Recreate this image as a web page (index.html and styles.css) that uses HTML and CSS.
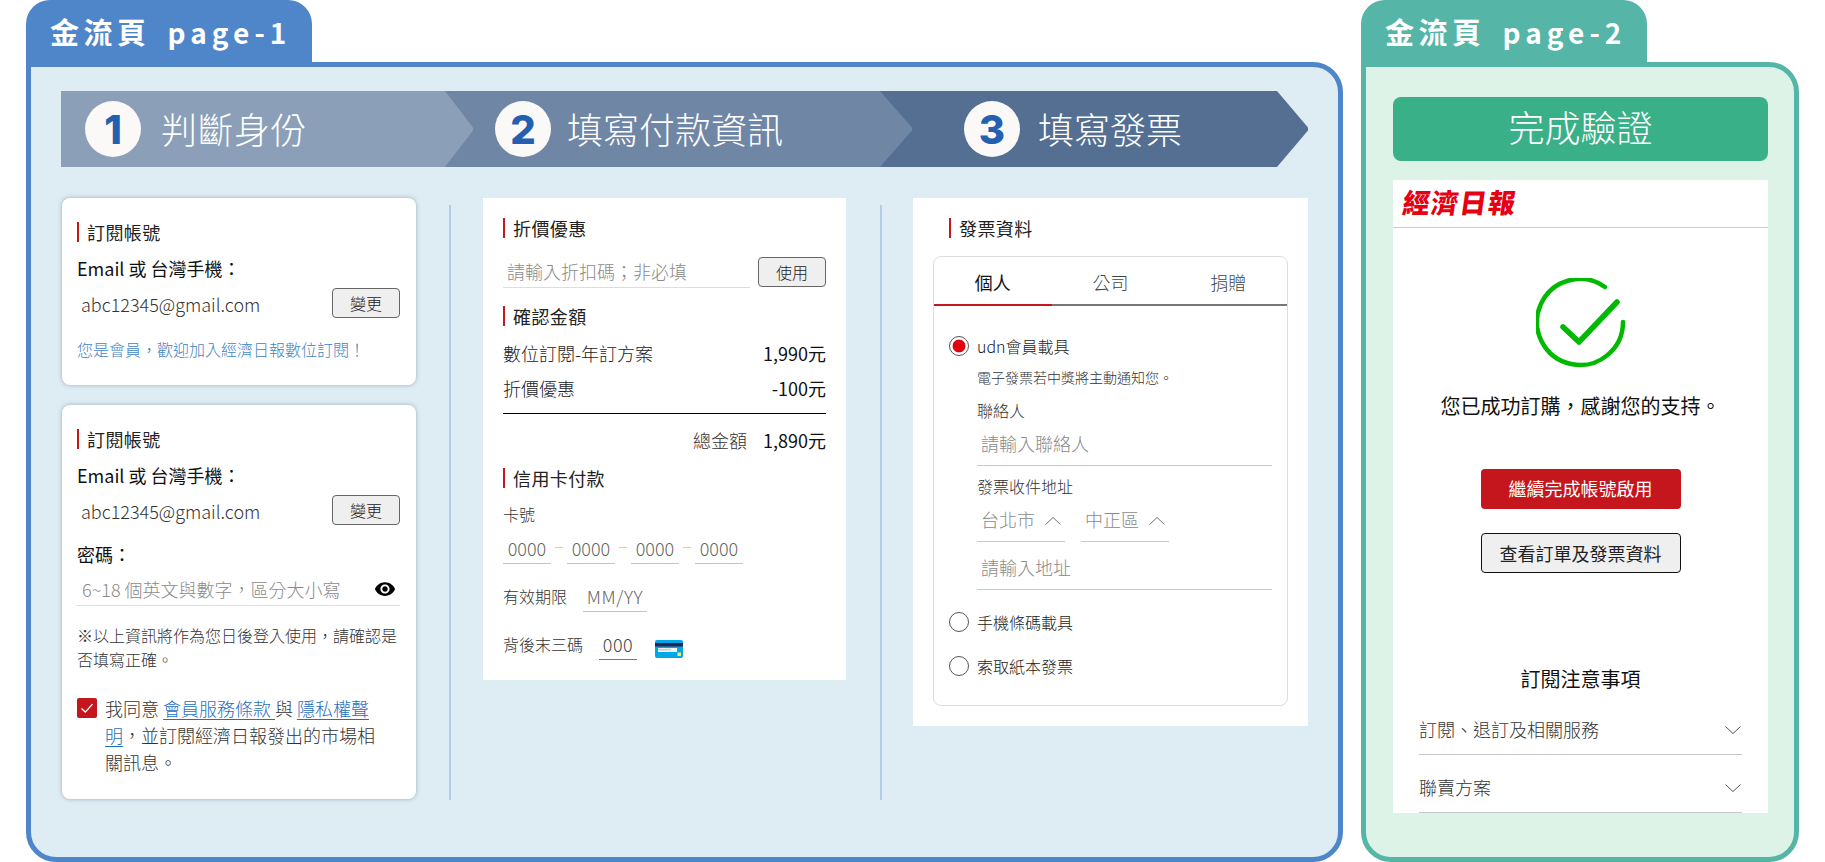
FILE: index.html
```html
<!DOCTYPE html>
<html lang="zh-Hant">
<head>
<meta charset="utf-8">
<title>金流頁</title>
<link rel="stylesheet" href="styles.css">
</head>
<body>
<div class="sheet">

<!-- PAGE 1 -->
<section class="page pageOne">
  <div class="pageTab">金流頁<span class="pageNum">page-1</span></div>
  <div class="pageBody">
    <div class="steps">
      <div class="step stepOne"><span class="stepNum">1</span><span class="stepText">判斷身份</span></div>
      <div class="step stepTwo"><span class="stepNum">2</span><span class="stepText">填寫付款資訊</span></div>
      <div class="step stepThree"><span class="stepNum">3</span><span class="stepText">填寫發票</span></div>
    </div>

    <div class="columns">
      <!-- identity -->
      <div class="colIdentity">
        <div class="card cardShort">
          <h3 class="head">訂閱帳號</h3>
          <div class="label labelEmail">Email 或 台灣手機：</div>
          <div class="accountRow"><span class="account">abc12345@gmail.com</span><button class="btn">變更</button></div>
          <p class="memberNote">您是會員，歡迎加入經濟日報數位訂閱！</p>
        </div>
        <div class="card">
          <h3 class="head">訂閱帳號</h3>
          <div class="label labelEmail">Email 或 台灣手機：</div>
          <div class="accountRow"><span class="account">abc12345@gmail.com</span><button class="btn">變更</button></div>
          <div class="label labelPassword">密碼：</div>
          <div class="passwordField">
            <span class="hint">6~18 個英文與數字，區分大小寫</span>
            <svg class="eye" viewBox="0 0 24 24" width="22" height="22"><path d="M12 4.5C7 4.5 2.73 7.61 1 12c1.73 4.39 6 7.5 11 7.5s9.27-3.11 11-7.5c-1.73-4.39-6-7.5-11-7.5zM12 17c-2.76 0-5-2.24-5-5s2.24-5 5-5 5 2.24 5 5-2.24 5-5 5zm0-8c-1.66 0-3 1.34-3 3s1.34 3 3 3 3-1.34 3-3-1.34-3-3-3z"/></svg>
          </div>
          <p class="passwordNote">※以上資訊將作為您日後登入使用，請確認是否填寫正確。</p>
          <div class="agree">
            <span class="checkbox"><svg viewBox="0 0 20 20" width="20" height="20"><path d="M4.5 10.5l3.8 3.6 7.2-8" fill="none" stroke="#fff" stroke-width="1.4"/></svg></span>
            <div class="agreeText">
              <div>我同意 <a href="#" class="link">會員服務條款 </a>與 <a href="#" class="link">隱私權聲</a></div>
              <div><a href="#" class="link">明</a>，並訂閱經濟日報發出的市場相</div>
              <div>關訊息。</div>
            </div>
          </div>
        </div>
      </div>

      <div class="rule ruleOne"></div>

      <!-- payment -->
      <div class="panel colPayment">
        <h3 class="head">折價優惠</h3>
        <div class="couponRow">
          <div class="couponField"><span class="hint">請輸入折扣碼；非必填</span></div>
          <button class="btn">使用</button>
        </div>
        <h3 class="head headConfirm">確認金額</h3>
        <div class="priceRow priceFirst"><span>數位訂閱-年訂方案</span><span class="price">1,990元</span></div>
        <div class="priceRow priceSecond"><span>折價優惠</span><span class="price">-100元</span></div>
        <div class="priceLine"></div>
        <div class="totalRow"><span class="totalLabel">總金額</span><span class="price">1,890元</span></div>
        <h3 class="head headCard">信用卡付款</h3>
        <div class="cardLabel">卡號</div>
        <div class="cardNumber">
          <span class="digits">0000</span><span class="dash"></span>
          <span class="digits">0000</span><span class="dash"></span>
          <span class="digits">0000</span><span class="dash"></span>
          <span class="digits">0000</span>
        </div>
        <div class="cardExtra">
          <span class="extraLabel expiryLabel">有效期限</span><span class="digits expiry">MM/YY</span>
        </div>
        <div class="cardExtra">
          <span class="extraLabel cvcLabel">背後末三碼</span><span class="digits cvc">000</span>
          <svg class="cardIcon" viewBox="0 0 28 18" width="28" height="18"><rect width="28" height="18" rx="2" fill="#00a8e8"/><rect y="3" width="28" height="3.5" fill="#2d2250"/><rect x="3" y="8" width="19" height="4" fill="#eef4f8"/><rect x="3" y="8.8" width="13" height="1.6" fill="#c6ccd0"/><rect x="22.500" y="12.500" width="3.500" height="3.500" fill="#ffe45c"/></svg>
        </div>
      </div>

      <div class="rule ruleTwo"></div>

      <!-- invoice -->
      <div class="panel colInvoice">
        <h3 class="head headInvoice">發票資料</h3>
        <div class="invoiceBox">
          <div class="tabs">
            <div class="tab tabActive">個人</div>
            <div class="tab">公司</div>
            <div class="tab">捐贈</div>
          </div>
          <div class="invoiceBody">
            <div class="radioRow radioFirst"><span class="radio radioOn"></span>udn會員載具</div>
            <div class="invoiceForm">
              <div class="smallNote">電子發票若中獎將主動通知您。</div>
              <div class="formLabel contactLabel">聯絡人</div>
              <div class="textField"><span class="hint">請輸入聯絡人</span></div>
              <div class="formLabel addressLabel">發票收件地址</div>
              <div class="selectRow">
                <div class="select"><span class="hint">台北市</span><svg class="chevron" viewBox="0 0 16 10" width="16" height="10"><path d="M.5 8.500L8 1.500l7.500 7" fill="none" stroke="#777" stroke-width="1"/></svg></div>
                <div class="select"><span class="hint">中正區</span><svg class="chevron" viewBox="0 0 16 10" width="16" height="10"><path d="M.5 8.500L8 1.500l7.500 7" fill="none" stroke="#777" stroke-width="1"/></svg></div>
              </div>
              <div class="textField addressField"><span class="hint">請輸入地址</span></div>
            </div>
            <div class="radioRow radioNext"><span class="radio"></span>手機條碼載具</div>
            <div class="radioRow radioNext"><span class="radio"></span>索取紙本發票</div>
          </div>
        </div>
      </div>
    </div>
  </div>
</section>

<!-- PAGE 2 -->
<section class="page pageTwo">
  <div class="pageTab">金流頁<span class="pageNum">page-2</span></div>
  <div class="pageBody">
    <div class="doneBar">完成驗證</div>
    <div class="phone">
      <div class="phoneTop"><span class="logo">經濟日報</span></div>
      <svg class="okIcon" viewBox="0 0 90 90" width="90" height="90"><path d="M87 44A43 43 0 1 1 69 9" fill="none" stroke="#00b900" stroke-width="4.500" stroke-linecap="round"/><path d="M27 49l16 15 38-40" fill="none" stroke="#00b900" stroke-width="5.500" stroke-linecap="round" stroke-linejoin="round"/></svg>
      <p class="thanks">您已成功訂購，感謝您的支持。</p>
      <button class="bigBtn bigRed">繼續完成帳號啟用</button>
      <button class="bigBtn bigGrey">查看訂單及發票資料</button>
      <h4 class="noticeHead">訂閱注意事項</h4>
      <div class="notices">
        <div class="notice"><span class="noticeText">訂閱、退訂及相關服務</span><svg viewBox="0 0 16 10" width="16" height="10"><path d="M.5 1.500L8 8.500l7.500-7" fill="none" stroke="#555" stroke-width="1"/></svg></div>
        <div class="notice"><span class="noticeText">聯賣方案</span><svg viewBox="0 0 16 10" width="16" height="10"><path d="M.5 1.500L8 8.500l7.500-7" fill="none" stroke="#555" stroke-width="1"/></svg></div>
      </div>
    </div>
  </div>
</section>

</div>
</body>
</html>
```

FILE: styles.css
```css
html, body
{
margin:0;
padding:0;
background:#fff;
overflow:hidden;
}
body
{
font-family:"Noto Sans CJK TC", "Noto Sans", sans-serif;
color:#222;
}
h3, h4, p
{
margin:0;
font-weight:400;
}
button
{
font-family:inherit;
}

.sheet
{
display:flex;
width:1825px;
height:862px;
padding-left:26px;
box-sizing:border-box;
}

/* page frames */
.page
{
display:flex;
flex-direction:column;
height:862px;
}
.pageOne
{
width:1317px;
margin-right:18px;
}
.pageTwo
{
width:438px;
}
.pageTab
{
width:286px;
height:62px;
box-sizing:border-box;
padding-left:24px;
border-radius:24px 24px 0 0;
color:#fff;
font-size:29px;
font-weight:700;
line-height:62px;
letter-spacing:4.500px;
}
.pageNum
{
margin-left:17px;
font-size:28px;
font-weight:700;
letter-spacing:5px;
}
.pageBody
{
flex:1;
box-sizing:border-box;
border:5px solid;
border-radius:0 30px 30px 30px;
}
.pageOne .pageTab
{
background:#4f86ca;
}
.pageOne .pageBody
{
border-color:#4f86ca;
background:#deecf4;
padding:24px 0 0 30px;
}
.pageTwo .pageTab
{
background:#55b5a6;
}
.pageTwo .pageBody
{
border-color:#55b5a6;
background:#def3e8;
padding:30px 26px 0 27px;
}

/* step arrows */
.steps
{
display:flex;
height:76px;
}
.step
{
display:flex;
align-items:center;
height:76px;
box-sizing:border-box;
color:#fff;
}
.stepOne
{
width:412px;
padding-left:24px;
background:#8b9fb8;
clip-path:polygon(0 0, calc(100% - 28px) 0, 100% 48%, 100% 52%, calc(100% - 28px) 100%, 0 100%);
position:relative;
z-index:3;
}
.stepTwo
{
width:467px;
margin-left:-28px;
padding-left:50px;
background:#7086a5;
clip-path:polygon(0 0, calc(100% - 32px) 0, 100% 48%, 100% 52%, calc(100% - 32px) 100%, 0 100%);
position:relative;
z-index:2;
}
.stepThree
{
width:428px;
margin-left:-32px;
padding-left:84px;
background:#546f91;
clip-path:polygon(0 0, calc(100% - 31px) 0, 100% 48%, 100% 52%, calc(100% - 31px) 100%, 0 100%);
}
.stepNum
{
display:flex;
align-items:center;
justify-content:center;
width:56px;
height:56px;
border-radius:50%;
background:#faf9f7;
color:#2560b0;
font-family:Inter, "Liberation Sans", sans-serif;
font-size:40px;
font-weight:800;
}
.stepText
{
margin-left:19px;
padding-bottom:2px;
font-size:36px;
font-weight:300;
line-height:48px;
}
.stepOne .stepText
{
margin-left:20px;
letter-spacing:.5px;
}
.stepTwo .stepText
{
margin-left:16px;
}
.stepThree .stepText
{
margin-left:18px;
}

/* columns */
.columns
{
display:flex;
align-items:flex-start;
margin-top:31px;
}
.colIdentity
{
width:354px;
margin-left:1px;
}
.rule
{
width:2px;
height:595px;
margin-top:7px;
background:#b3cde8;
}
.ruleOne
{
margin-left:33px;
margin-right:32px;
}
.ruleTwo
{
margin-left:34px;
margin-right:31px;
}

/* cards */
.card
{
box-sizing:border-box;
padding:24px 16px 23px 15px;
border-radius:8px;
background:#fff;
box-shadow:0 0 4px rgba(100,120,140,.55);
}
.cardShort
{
margin-bottom:20px;
}
.head
{
height:20px;
padding-left:8px;
border-left:2px solid #c4161c;
font-size:18px;
line-height:20px;
letter-spacing:.4px;
color:#222;
}
.label
{
margin-top:14px;
font-size:18px;
line-height:28px;
color:#111;
}
.labelEmail
{
line-height:24px;
padding-bottom:4px;
}
.labelPassword
{
margin-top:15px;
}
.accountRow
{
display:flex;
justify-content:space-between;
align-items:center;
margin-top:4px;
height:30px;
}
.account
{
padding:2px 0 0 4px;
font-size:18px;
font-weight:300;
color:#333;
}
.btn
{
width:68px;
height:30px;
padding:0;
box-sizing:border-box;
border:1px solid #666;
border-radius:4px;
background:#efefef;
font-size:16px;
font-weight:300;
color:#222;
}
.memberNote
{
margin-top:20px;
padding-bottom:2px;
font-size:16px;
font-weight:300;
line-height:22px;
color:#3f86c4;
}
.hint
{
font-size:18px;
font-weight:300;
color:#8a8a8a;
}
.passwordField
{
display:flex;
justify-content:space-between;
align-items:center;
height:32px;
margin-top:5px;
padding:0 4px 0 5px;
border-bottom:1px solid #ddd;
}
.eye
{
display:block;
}
.passwordNote
{
margin-top:17px;
font-size:16px;
font-weight:300;
line-height:24px;
color:#333;
}
.agree
{
display:flex;
margin-top:24px;
}
.checkbox
{
flex:none;
width:20px;
height:20px;
margin:3px 8px 0 0;
border-radius:2px;
background:#c4161c;
}
.checkbox svg
{
display:block;
}
.agreeText
{
font-size:18px;
font-weight:300;
line-height:27px;
color:#333;
}
.link
{
color:#1d70bf;
text-decoration:underline;
text-underline-offset:3px;
}

/* white panels */
.panel
{
box-sizing:border-box;
background:#fff;
padding:20px;
}
.colPayment
{
width:363px;
}
.couponRow
{
display:flex;
margin-top:19px;
}
.couponField
{
width:243px;
height:30px;
padding-left:4px;
border-bottom:1px solid #ddd;
line-height:28px;
}
.couponRow .btn
{
margin-left:8px;
}
.headConfirm
{
margin-top:18px;
}
.priceRow
{
display:flex;
justify-content:space-between;
padding-bottom:2px;
font-size:18px;
font-weight:300;
line-height:26px;
color:#222;
}
.priceFirst
{
margin-top:14px;
}
.priceSecond
{
margin-top:8px;
padding-bottom:4px;
line-height:24px;
}
.price
{
font-size:18px;
font-weight:400;
color:#111;
}
.priceLine
{
height:1px;
margin-top:9px;
background:#000;
}
.totalRow
{
display:flex;
justify-content:flex-end;
margin-top:14px;
padding-bottom:4px;
font-size:18px;
font-weight:300;
line-height:24px;
}
.totalLabel
{
margin-right:16px;
color:#333;
}
.headCard
{
margin-top:12px;
}
.cardLabel
{
margin-top:15px;
padding-bottom:2px;
font-size:16px;
font-weight:300;
line-height:22px;
color:#333;
}
.cardNumber
{
display:flex;
align-items:flex-start;
margin-top:8px;
}
.digits
{
width:48px;
height:28px;
box-sizing:content-box;
border-bottom:1px solid #c4c4c4;
font-size:18px;
font-weight:300;
line-height:26px;
text-align:center;
color:#666;
}
.dash
{
width:8px;
height:1px;
margin:12px 4px 0;
background:#ccc;
}
.cardExtra
{
display:flex;
align-items:flex-start;
margin-top:19px;
}
.extraLabel
{
font-size:16px;
font-weight:300;
line-height:26px;
color:#333;
}
.expiryLabel
{
width:80px;
}
.cvcLabel
{
width:96px;
}
.expiry
{
width:64px;
letter-spacing:.6px;
}
.cvc
{
width:38px;
border-bottom-color:#777;
letter-spacing:.5px;
color:#444;
}
.cardIcon
{
margin:9px 0 0 18px;
}

/* invoice */
.colInvoice
{
width:395px;
}
.headInvoice
{
margin-left:16px;
}
.invoiceBox
{
margin-top:18px;
box-sizing:border-box;
height:450px;
border:1px solid #ddd;
border-radius:8px;
}
.tabs
{
display:flex;
height:49px;
}
.tab
{
flex:1;
padding-top:2px;
box-sizing:border-box;
border-bottom:2px solid #777;
font-size:18px;
font-weight:300;
line-height:46px;
text-align:center;
color:#444;
}
.tabActive
{
border-bottom-color:#c4161c;
font-weight:400;
color:#111;
}
.invoiceBody
{
padding:0 15px;
}
.radioRow
{
display:flex;
align-items:center;
height:24px;
font-size:16px;
font-weight:300;
color:#222;
}
.radioFirst
{
margin-top:28px;
}
.radioNext
{
margin-top:20px;
}
.radio
{
flex:none;
box-sizing:border-box;
width:20px;
height:20px;
margin-right:8px;
border:1px solid #555;
border-radius:50%;
background:#fff;
}
.radioOn
{
background:radial-gradient(circle, #e00012 0, #e00012 6px, #fff 6.8px);
}
.invoiceForm
{
margin-left:28px;
}
.smallNote
{
margin-top:10px;
padding-bottom:2px;
font-size:14px;
font-weight:300;
line-height:18px;
color:#333;
}
.formLabel
{
padding-bottom:2px;
font-size:16px;
font-weight:300;
line-height:22px;
color:#333;
}
.contactLabel
{
margin-top:11px;
}
.addressLabel
{
margin-top:9px;
}
.textField
{
height:42px;
padding-left:4px;
border-bottom:1px solid #c8c8c8;
line-height:40px;
}
.addressField
{
margin-top:5px;
}
.selectRow
{
display:flex;
gap:16px;
margin-top:2px;
}
.select
{
display:flex;
align-items:center;
justify-content:space-between;
width:78px;
height:40px;
padding:0 5px;
border-bottom:1px solid #c8c8c8;
}
.select .hint
{
margin:-4px 0 0 -1px;
}
.chevron
{
display:block;
margin-right:-1px;
}

/* page 2 */
.doneBar
{
height:64px;
border-radius:8px;
background:#3ab089;
color:#fff;
font-size:36px;
font-weight:300;
line-height:59px;
text-align:center;
}
.phone
{
display:flex;
flex-direction:column;
align-items:center;
height:633px;
margin-top:19px;
overflow:hidden;
background:#fff;
}
.phoneTop
{
align-self:stretch;
box-sizing:border-box;
height:48px;
padding-left:10px;
border-bottom:1px solid #ccc;
}
.logo
{
display:inline-block;
font-size:27px;
font-weight:900;
line-height:44px;
letter-spacing:1.500px;
color:#e60012;
transform:skewX(-8deg);
}
.okIcon
{
display:block;
flex:none;
margin-top:50px;
}
.thanks
{
margin-top:24px;
font-size:20px;
line-height:28px;
color:#111;
}
.bigBtn
{
flex:none;
width:200px;
height:40px;
padding:0;
box-sizing:border-box;
border-radius:4px;
font-size:18px;
}
.bigRed
{
margin-top:49px;
padding-bottom:2px;
border:0;
background:#c4161c;
color:#fff;
}
.bigGrey
{
margin-top:24px;
border:1px solid #111;
background:#efefef;
color:#222;
}
.noticeHead
{
margin:92px 0 0;
font-size:20px;
font-weight:400;
line-height:28px;
color:#111;
}
.notices
{
align-self:stretch;
margin:4px 26px 0;
}
.notice
{
display:flex;
justify-content:space-between;
align-items:center;
padding:9px 1px 0 0;
height:48px;
border-bottom:1px solid #c8c8c8;
font-size:18px;
font-weight:300;
color:#333;
}
.noticeText
{
margin-top:-2px;
}
```
